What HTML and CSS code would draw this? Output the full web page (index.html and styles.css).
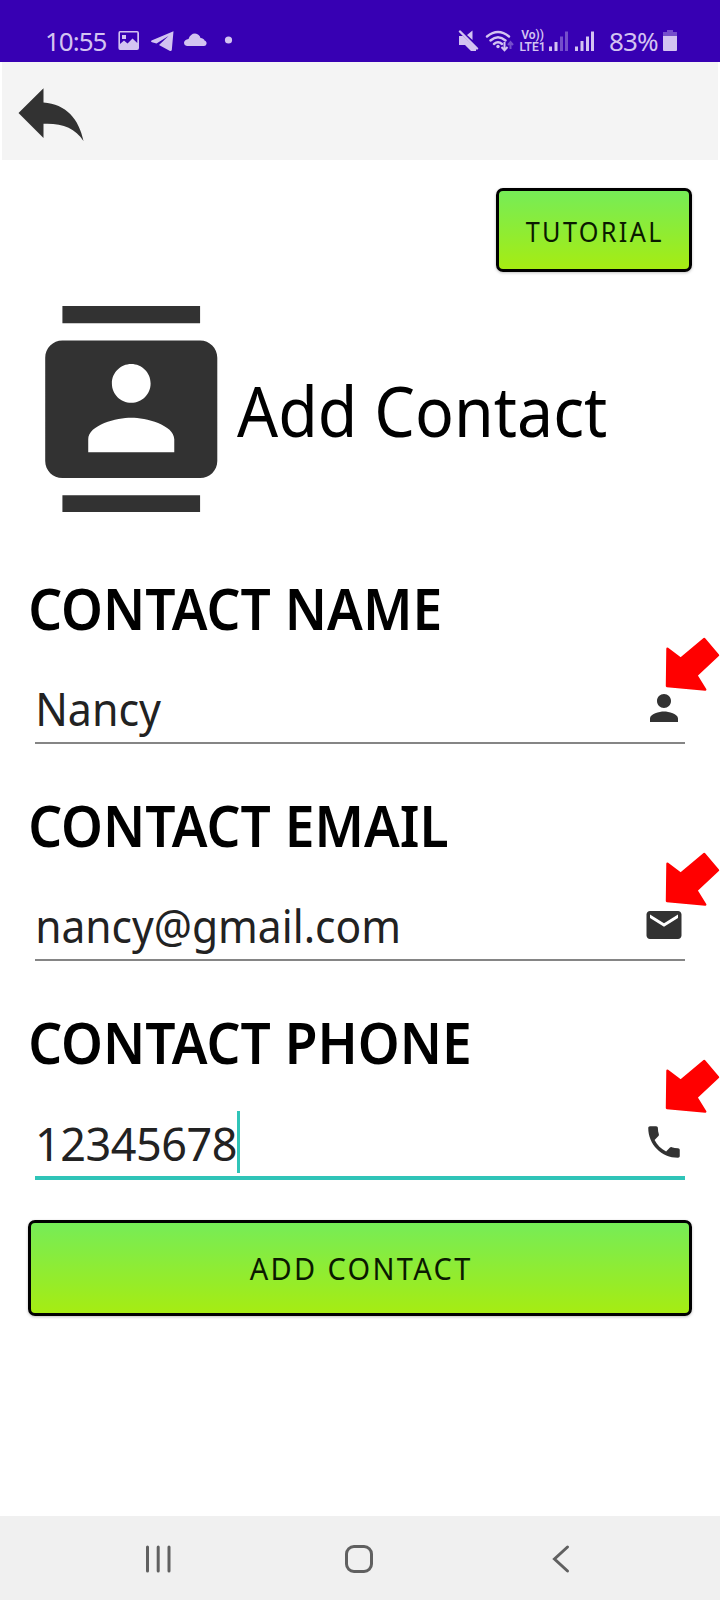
FILE: index.html
```html
<!DOCTYPE html>
<html lang="en">
<head>
<meta charset="utf-8">
<title>Add Contact</title>
<link rel="stylesheet" href="styles.css">
</head>
<body>
<div class="screen">
  <header class="status">
    <div class="status-left">
      <span class="clock">10:55</span>
      <svg class="st-icons" width="120" height="24" viewBox="0 0 120 24">
        <path fill-rule="evenodd" d="M2 1H19Q21 1 21 3V18Q21 20 19 20H2Q.4 20 .4 18V3Q.4 1 2 1ZM2 2.600V14L6 10.500 9.500 13.500 14.500 8.500 19.300 13V2.600ZM4 5H8V9H4Z"/>
        <path d="M55.500 1.300 33.500 10.500Q32.200 11.600 34 12.300L38.500 13.600 50.500 6 41 15 52 21Q53.500 21.300 53.800 20Z"/>
        <path d="M69 16Q66 15.500 66 12.500 66.500 9.500 70.500 9 72.500 3.500 77 3.500 81.500 4 82.500 8 86 8.500 86.500 10.500 89 11.500 88.500 14 88 16 86 16Z"/>
        <circle cx="110.500" cy="10" r="3.600"/>
      </svg>
    </div>
    <div class="status-right">
      <svg class="st-icons" width="60" height="24" viewBox="0 0 60 24">
        <path d="M1 6H5L18 18V21L13 21 7 15H1ZM9 5 14.500 .5V10Z"/>
        <path class="line" d="M2 1.500 19 18.500"/>
        <path class="line" d="M29 6.500Q40-2.500 51 6.500M32.500 10.500Q40 4 47.500 10.500M36 14Q40 10.500 44 14"/>
        <circle cx="40" cy="16.500" r="1.700"/>
        <path class="thin" d="M46.500 12V20M43.500 17 46.500 20.300 49.500 17"/>
        <path class="thin dim" d="M52.500 19V12.500M50 15 52.500 12 55 15"/>
      </svg>
      <div class="volte"><span>Vo))</span><span>LTE1</span></div>
      <svg class="st-icons" width="46" height="24" viewBox="0 0 46 24">
        <path d="M0 16.500H3V21H0ZM5.500 12H8.500V21H5.500Z"/>
        <path class="faded" d="M11 6.500H14V21H11ZM16 1.500H19V21H16Z"/>
        <path d="M26 16.500H29V21H26ZM31.500 11H34.500V21H31.500ZM37 6.500H40V21H37ZM42 1.500H45V21H42Z"/>
      </svg>
      <span class="percent">83%</span>
      <svg class="st-icons" width="15" height="24" viewBox="0 0 15 24">
        <path class="faded" d="M4 0H10V2H14V6H0V2H4Z"/>
        <path d="M0 6H14V20Q14 21 13 21H1Q0 21 0 20Z"/>
      </svg>
    </div>
  </header>

  <nav class="toolbar">
    <svg width="66" height="54" viewBox="0 0 66 54"><path fill="#323232" d="M-.5 26 24.500 1.200V15.500C47 17 60 32 64.500 54 56 41 43 36 24.500 36.800V51Z"/></svg>
  </nav>

  <main class="content">
    <div class="tutorial-row"><button class="btn tutorial"><span>TUTORIAL</span></button></div>

    <div class="title-row">
      <svg width="206.500" height="206.500" viewBox="0 0 24 24"><path fill="#323232" d="M20 0H4v2h16V0zM4 24h16v-2H4v2zM20 4H4c-1.100 0-2 .9-2 2v12c0 1.100.9 2 2 2h16c1.100 0 2-.9 2-2V6c0-1.100-.9-2-2-2zm-8 2.750c1.240 0 2.250 1.010 2.250 2.250s-1.010 2.250-2.250 2.250S9.750 10.240 9.750 9 10.760 6.750 12 6.750zM17 17H7v-1.500c0-1.670 3.330-2.500 5-2.500s5 .83 5 2.500V17z"/></svg>
      <h1 class="title">Add Contact</h1>
    </div>

    <section class="group">
      <h2 class="label">CONTACT NAME</h2>
      <div class="field">
        <span class="value name">Nancy</span>
        <svg class="field-icon" viewBox="0 0 24 24"><path d="M12 12c2.210 0 4-1.790 4-4s-1.790-4-4-4-4 1.790-4 4 1.790 4 4 4zm0 2c-2.670 0-8 1.340-8 4v2h16v-2c0-2.660-5.330-4-8-4z"/></svg>
        <svg class="arrow" viewBox="0 0 56 56"><path d="M2.500 12 16 22 40 2 54 18.500 32 39 41 53.500 2 50Z"/></svg>
      </div>
    </section>
    <section class="group">
      <h2 class="label">CONTACT EMAIL</h2>
      <div class="field">
        <span class="value email">nancy@gmail.com</span>
        <svg class="field-icon" viewBox="0 0 24 24"><path d="M20 4H4c-1.100 0-2 .9-2 2v12c0 1.100.9 2 2 2h16c1.100 0 2-.9 2-2V6c0-1.100-.9-2-2-2zm0 4l-8 5-8-5V6l8 5 8-5v2z"/></svg>
        <svg class="arrow second" viewBox="0 0 56 56"><path d="M2.500 12 16 22 40 2 54 18.500 32 39 41 53.500 2 50Z"/></svg>
      </div>
    </section>
    <section class="group last">
      <h2 class="label">CONTACT PHONE</h2>
      <div class="field focused">
        <span class="value phone">12345678</span><i class="caret"></i>
        <svg class="field-icon" viewBox="0 0 24 24"><path d="M6.620 10.790c1.440 2.830 3.760 5.140 6.590 6.590l2.200-2.200c.27-.27.67-.36 1.020-.24 1.120.37 2.330.57 3.570.57.55 0 1 .45 1 1V20c0 .55-.45 1-1 1-9.390 0-17-7.610-17-17 0-.55.45-1 1-1h3.500c.55 0 1 .45 1 1 0 1.250.2 2.450.57 3.570.11.35.03.74-.25 1.020l-2.200 2.200z"/></svg>
        <svg class="arrow third" viewBox="0 0 56 56"><path d="M2.500 12 16 22 40 2 54 18.500 32 39 41 53.500 2 50Z"/></svg>
      </div>
    </section>

    <button class="btn submit"><span>ADD CONTACT</span></button>
  </main>

  <footer class="navbar">
    <svg width="30" height="30" viewBox="0 0 30 30"><path d="M4.500 3V27M15.200 3V27M26 3V27"/></svg>
    <svg width="30" height="30" viewBox="0 0 30 30"><rect x="1.500" y="2.500" width="25" height="25" rx="7.500"/></svg>
    <svg width="30" height="30" viewBox="0 0 30 30"><path d="M21.500 3 8.500 15 21.500 27"/></svg>
  </footer>
</div>
</body>
</html>
```
FILE: styles.css
```css
* { box-sizing: border-box; }
body { margin: 0; background: #fff; font-family: "Noto Sans", "Open Sans", sans-serif; }
.screen { width: 720px; height: 1600px; display: flex; flex-direction: column; overflow: hidden; }
.status { height: 62px; flex: none; background: #3700b3; color: #d3c3f1; display: flex; justify-content: space-between; padding: 30px 42px 0 45px; }
.status-left, .status-right { display: flex; align-items: flex-start; }
.st-icons { fill: #d3c3f1; display: block; flex: none; }
.line { fill: none; stroke: #d3c3f1; stroke-width: 2.4; stroke-linecap: round; }
.thin { fill: none; stroke: #d3c3f1; stroke-width: 2; }
.dim { opacity: .4; }
.faded { opacity: .4; }
.clock, .percent { font-size: 26px; line-height: 22px; white-space: nowrap; }
.clock { width: 73px; letter-spacing: -1px; }
.percent { width: 54px; margin-left: 14px; letter-spacing: -.9px; }
.volte { width: 31px; margin-top: -1px; padding-right: 2px; display: flex; flex-direction: column; align-items: center; font-family: Roboto, sans-serif; font-size: 12px; line-height: 12px; font-weight: 600; white-space: nowrap; }
.toolbar { height: 98px; flex: none; margin: 0 2px; background: #f4f4f4; padding: 25px 17px; }
.toolbar svg { display: block; overflow: visible; }
.content { flex: 1; padding: 28px 28px 0; }
.tutorial-row { display: flex; justify-content: flex-end; height: 118px; }
.btn { display: flex; align-items: center; justify-content: center; border: 3px solid #000; border-radius: 7px; background: linear-gradient(#76ec57, #a6ec12); font-family: inherit; color: #0a1a00; padding: 0; white-space: nowrap; box-shadow: 0 1px 3px rgba(0,0,0,.25); }
.btn span { padding-left: 2px; transform: scaleX(.935); }
.tutorial { width: 196px; height: 84px; font-size: 27px; letter-spacing: 2.5px; }
.tutorial span { padding-top: 2px; }
.title-row { height: 206px; display: flex; align-items: center; }
.title { margin: 2px 0 0 2.5px; font-size: 69px; line-height: 94px; font-weight: 400; color: #000; white-space: nowrap; transform: scaleX(.934); transform-origin: left; }
.group { height: 217px; }
.title-row + .group { margin-top: 61px; }
.label { margin: 0; height: 69px; line-height: 70px; font-size: 57px; font-weight: 600; color: #000; white-space: nowrap; transform: scaleX(.935); transform-origin: 2px 50%; }
.field { position: relative; margin: 31px 7px 0; height: 71px; display: flex; align-items: center; border-bottom: 2px solid #858585; }
.value { padding-top: 2px; font-size: 45px; line-height: 69px; color: #222; white-space: nowrap; transform-origin: 3px 50%; }
.name { transform: scaleX(.955); }
.email { transform: scaleX(.945); }
.phone { padding-top: 4px; letter-spacing: -.5px; }
.field-icon { width: 42px; height: 42px; margin-left: auto; fill: #323232; flex: none; }
.focused { height: 73px; border-bottom: 4px solid #2fc4b8; }
.last { height: 213px; }
.caret { width: 3px; height: 62px; background: #2fc4b8; }
.arrow { position: absolute; left: 629.500px; top: -36.500px; width: 55px; height: 55px; fill: #f00; stroke: #f00; stroke-width: 2.4; stroke-linejoin: round; }
.second { top: -38.500px; }
.third { top: -48.500px; }
.submit { width: 664px; height: 96px; font-size: 31px; letter-spacing: 2.5px; }
.navbar { height: 84px; flex: none; background: #f0f0f0; display: flex; justify-content: space-between; padding: 28px 144px 0 143px; }
.navbar svg { fill: none; stroke: #606060; stroke-width: 3; stroke-linecap: round; }
```
